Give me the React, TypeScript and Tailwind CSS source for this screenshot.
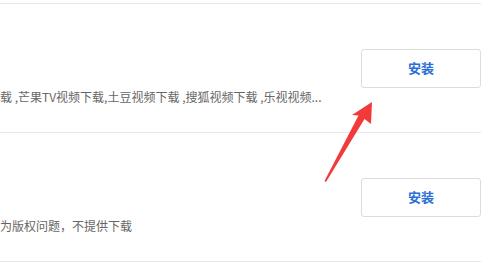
import React from "react";

const rows = [
  "载 ,芒果TV视频下载,土豆视频下载 ,搜狐视频下载 ,乐视视频...",
  "为版权问题，不提供下载",
];

function Arrow() {
  return (
    <svg
      className="absolute left-0 top-0 pointer-events-none"
      width="497"
      height="266"
      viewBox="0 0 497 266"
    >
      <polygon
        points="372,102 371,124 364.5,119 326,182 324.5,181 358.5,115.5 352,115"
        fill="#f23a3a"
      />
    </svg>
  );
}

export default function App() {
  return (
    <div
      className="relative w-[497px] h-[266px] bg-white overflow-hidden pt-[3px]"
      style={{ fontFamily: '"Noto Sans CJK SC", "Noto Sans", sans-serif' }}
    >
      <div className="w-[481px] border-b border-[#e8e8e8]">
        {rows.map((desc, i) => (
          <div
            key={i}
            className="h-[129px] border-t border-[#e8e8e8] flex justify-between items-center"
          >
            <div className="self-start pt-[85px]">
              <div className="text-[12px] leading-[16px] text-[#666] whitespace-nowrap">
                {desc}
              </div>
            </div>
            <button className="w-[120px] h-[39px] border border-[#dcdcdc] rounded-[3px] bg-white text-[13px] font-bold text-[#2a6fd6]">
              安装
            </button>
          </div>
        ))}
      </div>
      <Arrow />
    </div>
  );
}
